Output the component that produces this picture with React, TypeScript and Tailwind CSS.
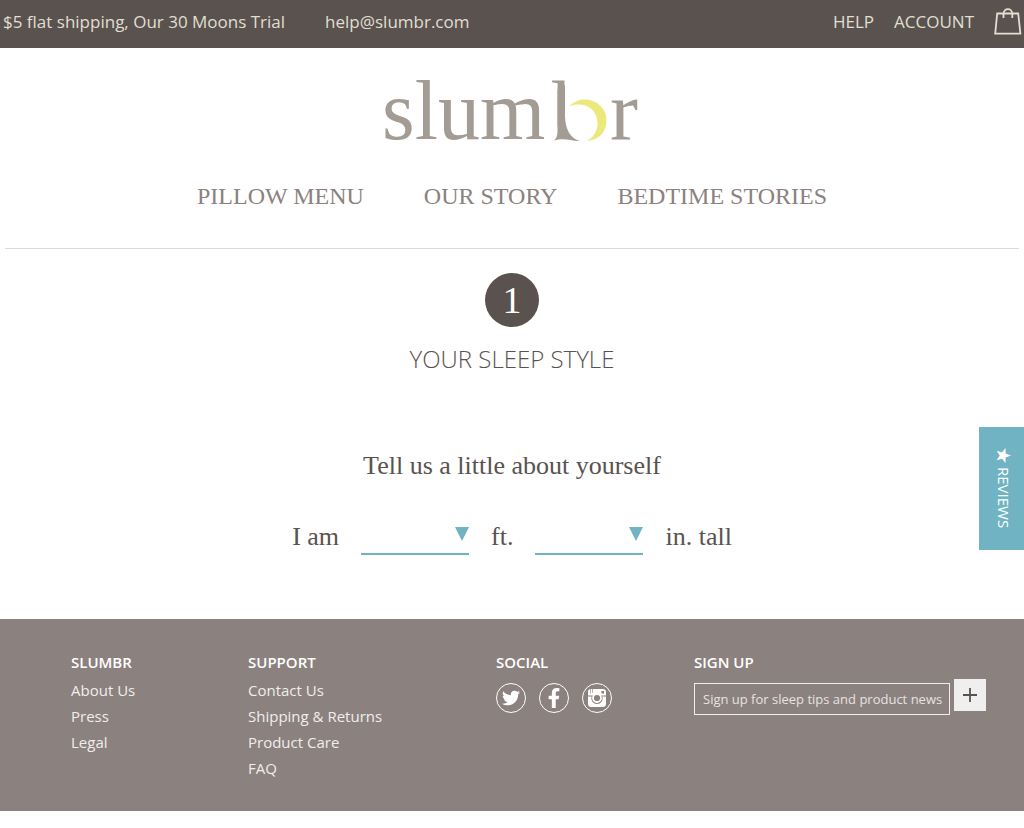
import type { ReactNode } from "react";
import { FaFacebookF, FaTwitter } from "react-icons/fa";

const sans = "font-['Open_Sans','Noto_Sans',sans-serif]";
const serif = "font-['Liberation_Serif','Times_New_Roman',serif]";

function BagIcon() {
  return (
    <svg width="28" height="28" viewBox="0 0 28 28" fill="none" stroke="#e0dfd0" strokeWidth="1.8" aria-hidden="true">
      <path d="M3.2 5.500H24.2L26.4 25.600H1.2Z" />
      <path d="M9.5 10V6C9.500 -0.500 18.300 -0.500 18.300 6V10" />
    </svg>
  );
}

function Logo() {
  return (
    <svg width="260" height="100" viewBox="0 -16 260 100" role="img" aria-label="slumbr">
      <g className={serif} fontSize="84" fill="#a29c94">
        <text x="0" y="62">slum</text>
        <text x="170" y="62">b</text>
        <path d="M183 -2H226V70H168V60L175 50H183Z" fill="#fff" />
        <text x="228" y="62">r</text>
      </g>
      <path d="M175.500 12L183 8V40C183.500 52 188 61 197.500 64C189 64.200 182 60.500 172 63.500C175 61 175.500 58 175.500 52Z" fill="#a29c94" />
      <path d="M187 29.500C193 23 200 22 205 22.500C216 24 224.500 32 224.500 43C224.500 55 217 63 205 64C212 60 216 53 215.500 45C214.500 31 202 24 187 29.500Z" fill="#ebe97b" />
    </svg>
  );
}

function InstagramIcon() {
  return (
    <svg width="18" height="18" viewBox="0 0 18 18" aria-hidden="true">
      <path
        fillRule="evenodd"
        fill="#fff"
        d="M3 0H15Q18 0 18 3V6.500H13.200A5.500 5.500 0 0 0 4.800 6.500H0V3Q0 0 3 0ZM13.400 2V4.600H16V2ZM2.400 0V4.500H3V0ZM4.400 0V4H5V0Z"
      />
      <path fill="#fff" d="M0 7.500H3.600A5.700 5.700 0 1 0 14.400 7.500H18V15Q18 18 15 18H3Q0 18 0 15Z" />
      <circle cx="9" cy="9" r="4" fill="none" stroke="#fff" strokeWidth="1.800" />
    </svg>
  );
}

function HeightSelect({ id, label, values }: { id: string; label: string; values: number[] }) {
  return (
    <span className="relative block w-[108px]">
      <select
        id={id}
        aria-label={label}
        defaultValue=""
        className="block h-[34px] w-full appearance-none border-b-2 border-[#70b3c2] bg-transparent pr-5 outline-none"
      >
        <option value="" />
        {values.map((v) => (
          <option key={v} value={v}>
            {v}
          </option>
        ))}
      </select>
      <svg className="pointer-events-none absolute right-0 top-[6px]" width="14" height="14" viewBox="0 0 14 14" aria-hidden="true">
        <path d="M0 0H14L7 14Z" fill="#70b3c2" />
      </svg>
    </span>
  );
}

function LinkColumn({ title, links }: { title: string; links: string[] }) {
  return (
    <div>
      <h2 className="font-semibold text-white">{title}</h2>
      <ul className="mt-[2px]">
        {links.map((l) => (
          <li key={l}>
            <a href="#">{l}</a>
          </li>
        ))}
      </ul>
    </div>
  );
}

function SocialLink({ label, children }: { label: string; children: ReactNode }) {
  return (
    <a href="#" aria-label={label} className="flex size-[30px] items-center justify-center rounded-full border border-white text-white">
      {children}
    </a>
  );
}

export default function App() {
  return (
    <div className={`relative bg-white text-[#59524f] ${sans}`}>
      <div className="flex h-12 items-center justify-between bg-[#59524f] pl-[3px] pr-[2px] text-[17px] leading-6 text-[#e0dfd0]">
        <div className="flex gap-10 pb-1">
          <a href="#">$5 flat shipping, Our 30 Moons Trial</a>
          <a href="mailto:help@slumbr.com">help@slumbr.com</a>
        </div>
        <div className="flex items-center gap-5 pb-1">
          <a href="#">HELP</a>
          <a href="#">ACCOUNT</a>
          <a href="#" aria-label="Cart">
            <BagIcon />
          </a>
        </div>
      </div>

      <header className="mx-[5px] flex flex-col items-center border-b border-[#ddd8d4] pb-9 pt-[13px]">
        <a href="#">
          <Logo />
        </a>
        <nav className={`mt-[19px] flex justify-center gap-15 text-2xl leading-8 text-[#8b817e] ${serif}`}>
          <a href="#">PILLOW MENU</a>
          <a href="#">OUR STORY</a>
          <a href="#">BEDTIME STORIES</a>
        </nav>
      </header>

      <main className="flex flex-col items-center pb-16 pt-6">
        <div className={`flex size-[54px] items-center justify-center rounded-full bg-[#59524f] text-[38px] leading-none text-white ${serif}`}>1</div>
        <h1 className="mt-4 text-2xl font-light">YOUR SLEEP STYLE</h1>
        <form className={`flex flex-col items-center text-[26px] leading-8 ${serif}`}>
          <p className="mt-[75px]">Tell us a little about yourself</p>
          <div className="mt-[39px] flex items-start gap-[22px]">
            <label htmlFor="feet">I am</label>
            <HeightSelect id="feet" label="Height, feet" values={[3, 4, 5, 6, 7]} />
            <label htmlFor="inches">ft.</label>
            <HeightSelect id="inches" label="Height, inches" values={[0, 1, 2, 3, 4, 5, 6, 7, 8, 9, 10, 11]} />
            <span>in. tall</span>
          </div>
        </form>
      </main>

      <footer className="grid h-48 grid-cols-[177px_248px_198px_1fr] bg-[#8b817e] pl-[71px] pr-9 pt-[30px] text-[15px] leading-[26px] text-[#f0eeec]">
        <LinkColumn title="SLUMBR" links={["About Us", "Press", "Legal"]} />
        <LinkColumn title="SUPPORT" links={["Contact Us", "Shipping & Returns", "Product Care", "FAQ"]} />
        <div>
          <h2 className="font-semibold text-white">SOCIAL</h2>
          <div className="mt-2 flex gap-[13px]">
            <SocialLink label="Twitter">
              <FaTwitter size={18} />
            </SocialLink>
            <SocialLink label="Facebook">
              <FaFacebookF size={20} />
            </SocialLink>
            <SocialLink label="Instagram">
              <InstagramIcon />
            </SocialLink>
          </div>
        </div>
        <form onSubmit={(e) => e.preventDefault()}>
          <label htmlFor="email" className="block font-semibold text-white">
            SIGN UP
          </label>
          <div className="mt-1 flex items-start gap-1">
            <input
              id="email"
              type="email"
              placeholder="Sign up for sleep tips and product news"
              className="mt-1 h-8 w-full min-w-0 max-w-64 border border-[#f0eeec] bg-transparent pl-2 pr-1 text-[13px] text-white outline-none placeholder:text-[#e6e3e0]"
            />
            <button type="submit" aria-label="Sign up" className="flex size-8 shrink-0 items-center justify-center bg-[#efefef]">
              <svg width="14" height="14" viewBox="0 0 14 14" stroke="#59524f" strokeWidth="1.800" aria-hidden="true">
                <path d="M7 0V14M0 7H14" />
              </svg>
            </button>
          </div>
        </form>
      </footer>

      <button
        type="button"
        className="absolute right-0 top-[427px] flex h-[123px] w-[45px] items-center justify-center gap-1 bg-[#70b3c2] pl-1 text-[15px] text-white [writing-mode:vertical-rl]"
      >
        <svg width="15" height="15" viewBox="0 0 24 24" fill="#fff" aria-hidden="true">
          <path d="M24 12L15.500 15.100L15.200 24L9.600 17L1 19.500L6 12L1 4.500L9.600 7L15.200 0L15.500 8.900Z" />
        </svg>
        REVIEWS
      </button>
    </div>
  );
}
